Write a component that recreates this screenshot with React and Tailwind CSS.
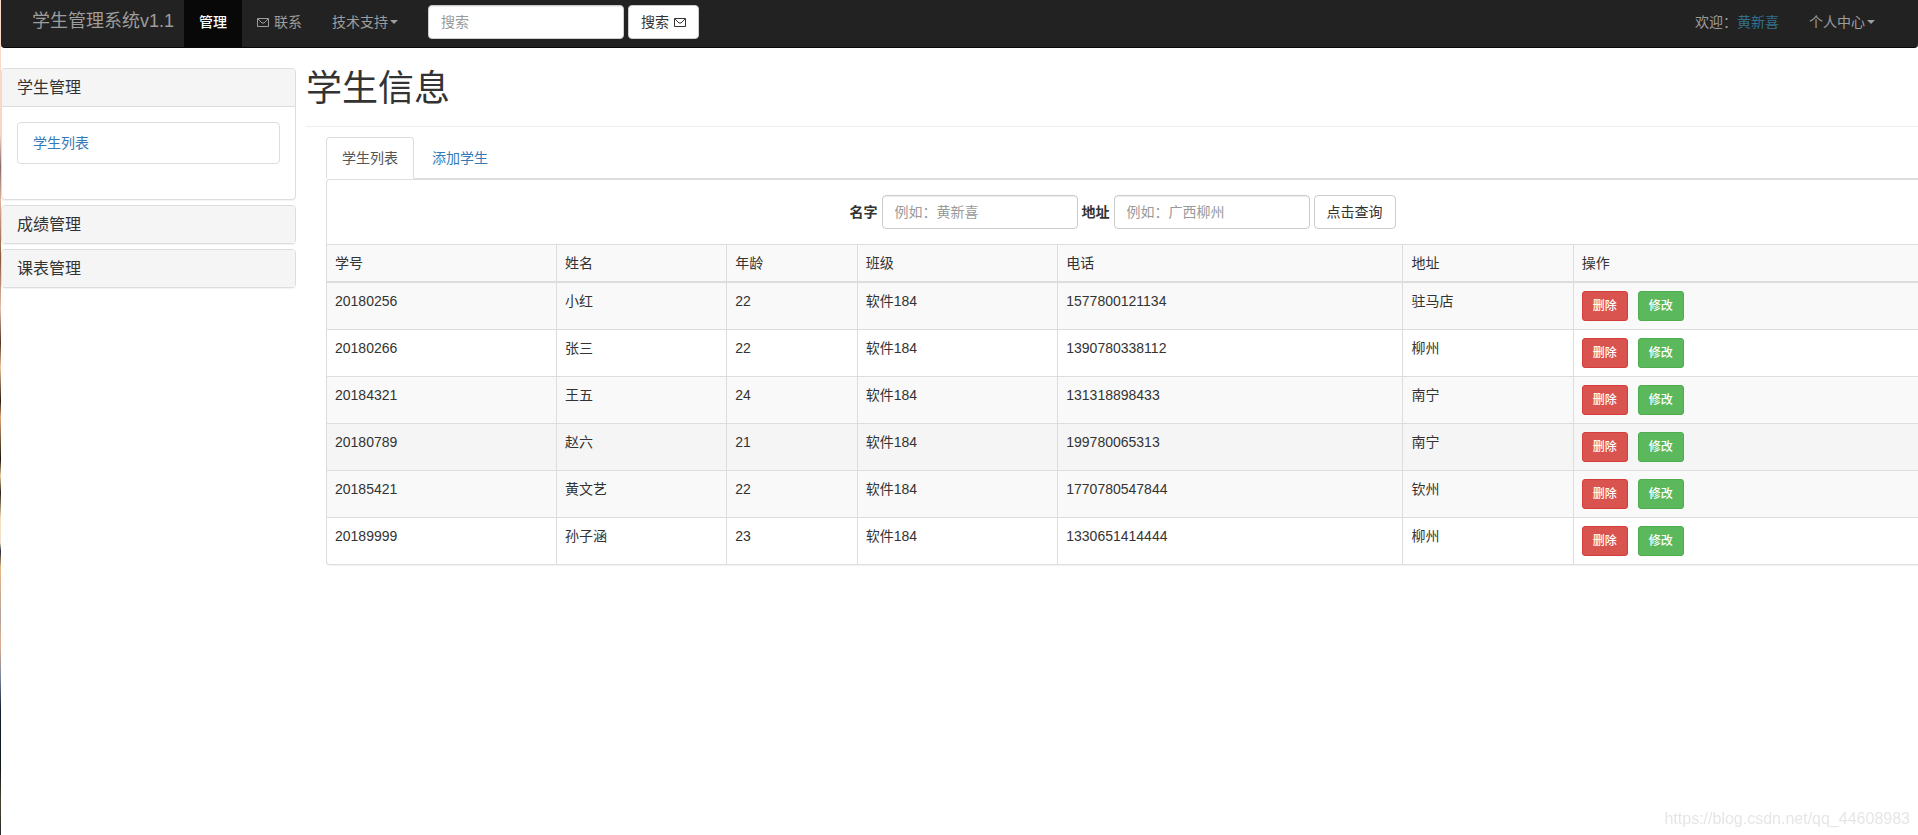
import React, { useState } from 'react';

const initialStudents = [
  { id: '20180256', name: '小红', age: 22, className: '软件184', phone: '1577800121134', address: '驻马店' },
  { id: '20180266', name: '张三', age: 22, className: '软件184', phone: '1390780338112', address: '柳州' },
  { id: '20184321', name: '王五', age: 24, className: '软件184', phone: '131318898433', address: '南宁' },
  { id: '20180789', name: '赵六', age: 21, className: '软件184', phone: '199780065313', address: '南宁' },
  { id: '20185421', name: '黄文艺', age: 22, className: '软件184', phone: '1770780547844', address: '钦州' },
  { id: '20189999', name: '孙子涵', age: 23, className: '软件184', phone: '1330651414444', address: '柳州' },
];

const inputClass =
  'h-[34px] w-[196px] rounded border border-[#ccc] bg-white px-3 text-sm text-[#555] shadow-[inset_0_1px_1px_rgba(0,0,0,0.075)] placeholder:text-[#999]';
const buttonClass = 'h-[34px] rounded border border-[#ccc] bg-white px-3 text-sm text-[#333] hover:bg-[#e6e6e6]';
const smallButtonClass = 'h-[30px] rounded-[3px] border px-[10px] text-xs font-medium text-white';
const cellClass = 'border-l border-[#ddd] p-2 align-top first:border-l-0';

const Envelope = () => (
  <svg className="inline-block h-[10px] w-3 shrink-0" viewBox="0 0 12 10" fill="none" stroke="currentColor">
    <path d="M0.5 1.5h11v8h-11zM1 2l4 4h2l4-4" />
  </svg>
);

const Caret = () => <span className="h-0 w-0 border-x-4 border-t-4 border-x-transparent border-t-current" />;

const Navbar = () => {
  const [keyword, setKeyword] = useState('');

  return (
    <nav className="flex h-12 items-start rounded-b border-b border-[#080808] bg-[#222] pr-[28px] pl-4 text-sm leading-5 text-[#9d9d9d]">
      <a href="#" className="pt-[11px] pr-[10px] pl-[15px] text-lg leading-5">学生管理系统v1.1</a>
      <a href="#" className="h-[47px] bg-[#080808] px-[15px] pt-3 font-medium text-white">管理</a>
      <a href="#" className="flex items-center gap-[5px] px-[15px] pt-3">
        <Envelope />
        联系
      </a>
      <a href="#" className="flex items-center gap-[2px] px-[15px] pt-3">
        技术支持
        <Caret />
      </a>
      <form className="flex gap-1 px-[15px] pt-[5px]" onSubmit={(e) => e.preventDefault()}>
        <input
          type="text"
          aria-label="搜索"
          placeholder="搜索"
          className={inputClass}
          value={keyword}
          onChange={(e) => setKeyword(e.target.value)}
        />
        <button type="submit" className={`${buttonClass} flex items-center gap-[5px]`}>
          搜索
          <Envelope />
        </button>
      </form>
      <p className="ml-auto px-[15px] pt-3">
        欢迎：<a href="#" className="text-[#31708f]">黄新喜</a>
      </p>
      <a href="#" className="flex items-center gap-[2px] px-[15px] pt-3">
        个人中心
        <Caret />
      </a>
    </nav>
  );
};

const SidePanel = ({ title, children }) => (
  <section className="rounded border border-[#ddd] bg-white shadow-[0_1px_1px_rgba(0,0,0,0.05)]">
    <h4 className="rounded-t-[3px] bg-[#f5f5f5] px-[15px] py-[10px] text-base leading-[17px]">
      <a href="#">{title}</a>
    </h4>
    {children}
  </section>
);

const Sidebar = () => (
  <aside className="flex w-[295px] shrink-0 flex-col gap-[5px]">
    <SidePanel title="学生管理">
      <div className="border-t border-[#ddd] px-[15px] pt-[15px] pb-[35px]">
        <a href="#" className="block rounded border border-[#ddd] px-[15px] py-[10px] text-[#337ab7]">学生列表</a>
      </div>
    </SidePanel>
    <SidePanel title="成绩管理" />
    <SidePanel title="课表管理" />
  </aside>
);

const SearchForm = () => (
  <form className="flex items-center justify-center gap-1 py-[15px]" onSubmit={(e) => e.preventDefault()}>
    <label htmlFor="name" className="font-bold">名字</label>
    <input id="name" type="text" placeholder="例如：黄新喜" className={inputClass} />
    <label htmlFor="address" className="font-bold">地址</label>
    <input id="address" type="text" placeholder="例如：广西柳州" className={inputClass} />
    <button type="submit" className={buttonClass}>点击查询</button>
  </form>
);

const StudentTable = () => {
  const [students, setStudents] = useState(initialStudents);
  const [active, setActive] = useState('20180789');

  const handleDelete = (id) => {
    setStudents(students.filter((s) => s.id !== id));
  };

  return (
    <table className="w-full table-fixed border-separate border-spacing-0 border-t border-[#ddd] text-left">
      <thead>
        <tr className="bg-[#f9f9f9]">
          <th className={`${cellClass} w-[14.4%] border-b-2 font-normal`}>学号</th>
          <th className={`${cellClass} w-[10.7%] border-b-2 font-normal`}>姓名</th>
          <th className={`${cellClass} w-[8.2%] border-b-2 font-normal`}>年龄</th>
          <th className={`${cellClass} w-[12.6%] border-b-2 font-normal`}>班级</th>
          <th className={`${cellClass} w-[21.7%] border-b-2 font-normal`}>电话</th>
          <th className={`${cellClass} w-[10.7%] border-b-2 font-normal`}>地址</th>
          <th className={`${cellClass} border-b-2 font-normal`}>操作</th>
        </tr>
      </thead>
      <tbody className="[&>tr:not(:last-child)>td]:border-b">
        {students.map((s) => (
          <tr
            key={s.id}
            className={s.id === active ? 'bg-[#f5f5f5]' : 'odd:bg-[#f9f9f9]'}
            onMouseEnter={() => setActive(s.id)}
          >
            <td className={cellClass}>{s.id}</td>
            <td className={cellClass}>{s.name}</td>
            <td className={cellClass}>{s.age}</td>
            <td className={cellClass}>{s.className}</td>
            <td className={cellClass}>{s.phone}</td>
            <td className={cellClass}>{s.address}</td>
            <td className={cellClass}>
              <div className="flex gap-[10px]">
                <button
                  type="button"
                  className={`${smallButtonClass} border-[#d43f3a] bg-[#d9534f]`}
                  onClick={() => handleDelete(s.id)}
                >
                  删除
                </button>
                <button type="button" className={`${smallButtonClass} border-[#4cae4c] bg-[#5cb85c]`}>
                  修改
                </button>
              </div>
            </td>
          </tr>
        ))}
      </tbody>
    </table>
  );
};

const App = () => {
  return (
    <div className="flex min-h-screen bg-white font-['Liberation_Sans','Noto_Sans_CJK_SC',sans-serif] text-sm leading-5 text-[#333]">
      {/* page background showing at the left edge */}
      <div className="w-px shrink-0 bg-[linear-gradient(#fbd9c8_0%,#fbd9c8_16%,#8a6a6a_20%,#e0b49a_24%,#8a5a3a_31%,#e8bfae_37%,#5a3020_41%,#f0c8a0_44%,#2a1a10_48%,#e0a878_50%,#1a1408_55%,#f0cfa0_57%,#2a2018_59%,#f6dfb8_62%,#f0e0d0_65%,#2a2a38_66%,#e8b888_68%,#b0a098_74%,#e0b090_77%,#8088a0_81%,#102030_85%,#101818_92%,#4a4430_96%,#2b2828_100%)]" />
      <div className="min-w-0 grow">
        <Navbar />
        <div className="flex items-start gap-[10px] pt-5">
          <Sidebar />
          <main className="min-w-0 grow">
            <h1 className="border-b border-[#eee] pb-[17px] text-4xl leading-[41px]">学生信息</h1>
            <div className="pt-[10px] pl-5">
              <div className="flex border-b border-[#ddd]">
                <a href="#" className="-mb-px mr-[2px] rounded-t border border-[#ddd] border-b-white bg-white px-[15px] py-[10px] text-[#555]">
                  学生列表
                </a>
                <a href="#" className="-mb-px border border-transparent px-[15px] py-[10px] text-[#337ab7]">添加学生</a>
              </div>
              <div className="overflow-hidden rounded-l border border-r-0 border-[#ddd] shadow-[0_1px_1px_rgba(0,0,0,0.05)]">
                <SearchForm />
                <StudentTable />
              </div>
            </div>
          </main>
        </div>
      </div>
      <p className="pointer-events-none fixed right-2 bottom-2 text-base leading-4 text-[#e6e6e6]">
        https://blog.csdn.net/qq_44608983
      </p>
    </div>
  );
};

export default App;
